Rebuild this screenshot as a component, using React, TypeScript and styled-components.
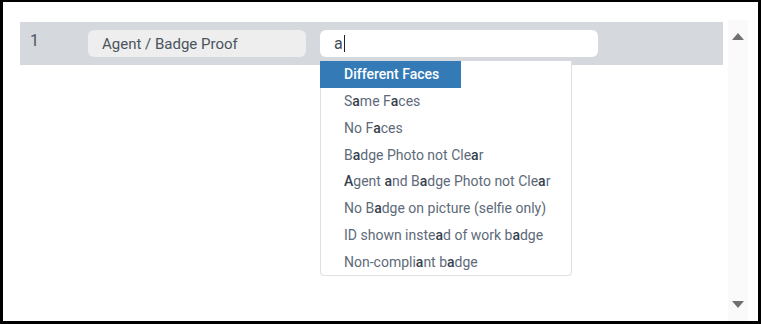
import styled, { createGlobalStyle } from 'styled-components';

const GlobalStyle = createGlobalStyle`
  html, body {
    margin: 0;
    padding: 0;
    background: #ffffff;
  }
  body {
    font-family: Roboto, "Liberation Sans", sans-serif;
  }
`;

const Frame = styled.div`
  box-sizing: border-box;
  width: 761px;
  height: 324px;
  border: 3px solid #000;
  border-top-width: 2px;
  display: flex;
  background: #fff;
`;

const Content = styled.div`
  flex: 1;
  padding: 20px 5px 0 17px;
`;

const Row = styled.div`
  position: relative;
  height: 43px;
  background: #d5d9dd;
  display: flex;
  align-items: center;
`;

const Index = styled.div`
  width: 68px;
  box-sizing: border-box;
  padding: 0 0 6px 10px;
  font-size: 16px;
  color: #4c5561;
`;

const Label = styled.div`
  box-sizing: border-box;
  width: 218px;
  height: 27px;
  margin-right: 14px;
  padding-left: 14px;
  border-radius: 6px;
  background: #eeeeee;
  display: flex;
  align-items: center;
  font-size: 15px;
  color: #4a5360;
`;

const InputBox = styled.div`
  position: relative;
  box-sizing: border-box;
  width: 278px;
  height: 27px;
  padding-left: 14px;
  border-radius: 6px;
  background: #ffffff;
  display: flex;
  align-items: center;
  font-size: 16px;
  color: #444c57;
`;

const Caret = styled.span`
  display: inline-block;
  width: 1px;
  height: 17px;
  margin-left: 1px;
  background: #222;
`;

const Menu = styled.ul`
  position: absolute;
  top: 39px;
  left: 300px;
  width: 252px;
  box-sizing: border-box;
  margin: 0;
  padding: 0;
  list-style: none;
  background: #fff;
  border: 1px solid #dde1e6;
  border-top: none;
  border-radius: 0 0 4px 4px;
  z-index: 2;
`;

const Item = styled.li<{ $active?: boolean }>`
  box-sizing: border-box;
  height: 26.75px;
  display: flex;
  align-items: center;
  width: ${(p) => (p.$active ? '141px' : 'auto')};
  margin-left: ${(p) => (p.$active ? '-1px' : '0')};
  padding-left: ${(p) => (p.$active ? '24px' : '23px')};
  font-size: 14px;
  background: ${(p) => (p.$active ? '#337ab7' : 'transparent')};
  color: ${(p) => (p.$active ? '#ffffff' : '#5e6a79')};
  font-weight: ${(p) => (p.$active ? 500 : 400)};
  white-space: pre;
`;

const Match = styled.span<{ $active?: boolean }>`
  font-weight: 500;
  color: ${(p) => (p.$active ? '#ffffff' : '#36414d')};
`;

const Scrollbar = styled.div`
  width: 20px;
  margin: 18px 10px 0 0;
  background: #fafafa;
  display: flex;
  flex-direction: column;
  justify-content: space-between;
  align-items: center;
  padding: 13px 0 13px;
`;

const Arrow = styled.div<{ $down?: boolean }>`
  width: 0;
  height: 0;
  border-left: 6px solid transparent;
  border-right: 6px solid transparent;
  ${(p) =>
    p.$down ? 'border-top: 7px solid #707070;' : 'border-bottom: 7px solid #707070;'}
`;

const options = [
  'Different Faces',
  'Same Faces',
  'No Faces',
  'Badge Photo not Clear',
  'Agent and Badge Photo not Clear',
  'No Badge on picture (selfie only)',
  'ID shown instead of work badge',
  'Non-compliant badge',
];

function highlight(text: string, active: boolean) {
  return (
    <span>
      {text.split(/([aA])/).map((part, i) =>
        /^[aA]$/.test(part) ? (
          <Match key={i} $active={active}>
            {part}
          </Match>
        ) : (
          part
        )
      )}
    </span>
  );
}

export default function App() {
  return (
    <>
      <GlobalStyle />
      <Frame>
        <Content>
          <Row>
            <Index>1</Index>
            <Label>Agent / Badge Proof</Label>
            <InputBox>
              a<Caret />
            </InputBox>
            <Menu>
              {options.map((o, i) => (
                <Item key={o} $active={i === 0}>
                  {highlight(o, i === 0)}
                </Item>
              ))}
            </Menu>
          </Row>
        </Content>
        <Scrollbar>
          <Arrow />
          <Arrow $down />
        </Scrollbar>
      </Frame>
    </>
  );
}
